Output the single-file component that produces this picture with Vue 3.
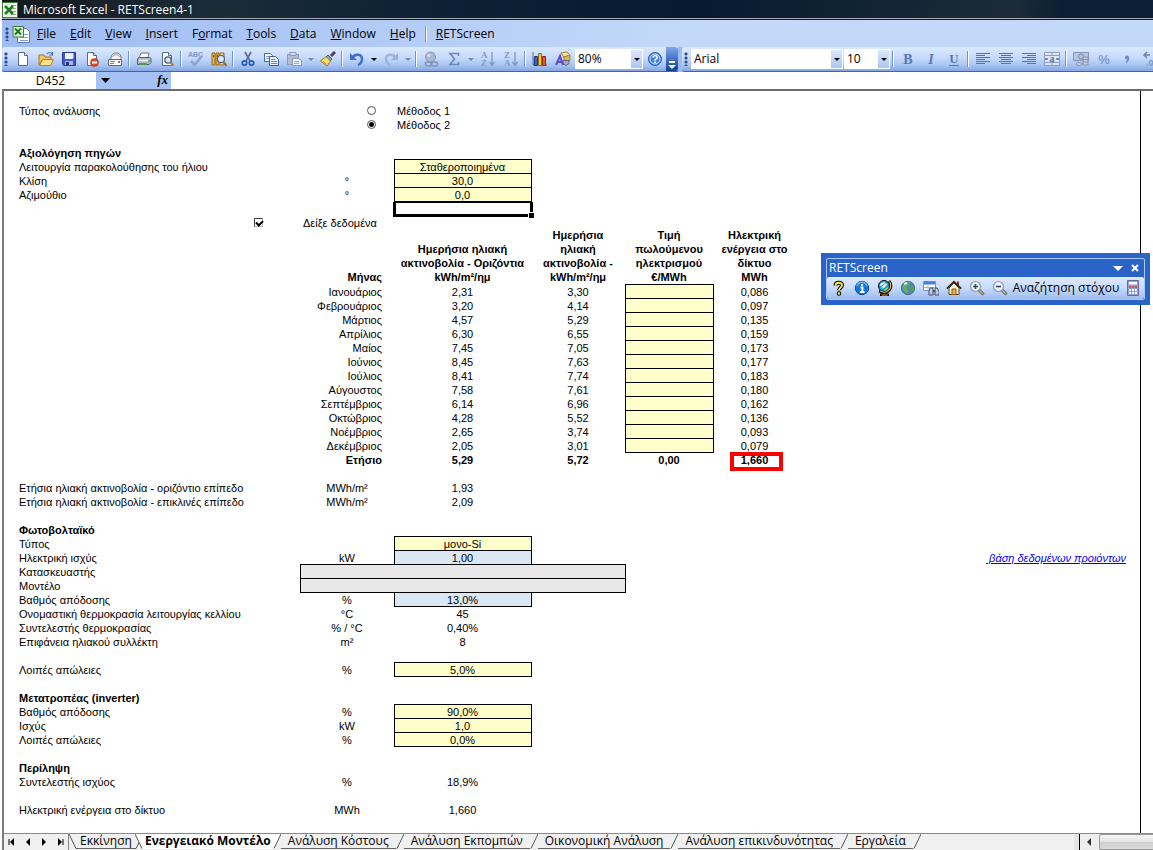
<script setup>
import { ref } from 'vue'

const menus = [
  ['', 'F', 'ile'], ['', 'E', 'dit'], ['', 'V', 'iew'], ['', 'I', 'nsert'], ['F', 'o', 'rmat'],
  ['', 'T', 'ools'], ['', 'D', 'ata'], ['', 'W', 'indow'], ['', 'H', 'elp'],
]

const page = '<path d="M3.5 1.5h6l3 3v10h-9z" fill="#fff" stroke="#5a6a8c"/><path d="M9.500 1.500v3h3" fill="#d5e2f7" stroke="#5a6a8c"/>'
const art = {
  new: page,
  open: '<path d="M1 4h5l1 2h6v3H4l-3 5z" fill="#f6c65a" stroke="#a87420"/><path d="M1.500 14.500l3-6h11l-3 6z" fill="#ffe08a" stroke="#b98127"/><path d="M9 3c2-2 4-2 5 0M14.500 1v3h-3" fill="none" stroke="#4a6fae" stroke-width="1.200"/>',
  save: '<path d="M1.500 1.500h13v13h-12l-1-1z" fill="#4457c8" stroke="#2c3a94"/><path d="M4 2h8v6H4z" fill="#eef2ff"/><path d="M4 10h8v4H4z" fill="#a9b4e4"/><path d="M5 11h3v3H5z" fill="#26327e"/><path d="M12.500 2v5" stroke="#8d9aec"/>',
  perm: page + '<circle cx="10.500" cy="11.500" r="4" fill="#e2491d" stroke="#a12a0c" stroke-width=".6"/><path d="M8 11.500h5" stroke="#fff" stroke-width="2"/>',
  mail: '<path d="M4 6c1-5 9-6 10 0v3H4z" fill="#f4f4f4" stroke="#6d7382"/><path d="M5.500 6c1-3 6-3 7 0" fill="none" stroke="#9aa0b0"/><path d="M1.500 8.500h13v6h-13z" fill="#fff" stroke="#5f6779"/><path d="M3 10.500h5M3 12.500h4" stroke="#6b88c2"/><path d="M11 10h2v2h-2z" fill="#cf5944"/>',
  print: '<path d="M5 2h8l-1 5H3z" fill="#fff" stroke="#6a7386"/><path d="M1.500 7.500l2-1h10l1.500 1v4l-2 2h-11.500z" fill="#b9bfca" stroke="#555d6c"/><path d="M3 9.500h9" stroke="#f8f8f8"/><path d="M3 12h8v2H3z" fill="#4f9a4f"/><path d="M12 9h2v2h-2z" fill="#58c058"/>',
  preview: page + '<circle cx="9" cy="9" r="3.200" fill="#cfe3fb" stroke="#4d5d7e" stroke-width="1.300"/><path d="M11.500 11.500l3 3" stroke="#c08124" stroke-width="2.400"/>',
  spell: '<text x="0" y="6" font-size="7" font-weight="bold" font-family="Liberation Sans" fill="#7f97c6">ABC</text><path d="M3 10l3.500 4L14 5" fill="none" stroke="#8ca4cf" stroke-width="2.600"/>',
  research: '<path d="M1 2h3v12H1zM5 2h3v12H5z" fill="#e6b24c" stroke="#9a6a1d"/><path d="M9 2h4v12H9z" fill="#f1d08a" stroke="#9a6a1d"/><path d="M2 5h1M6 5h1M10 5h2" stroke="#b0432b" stroke-width="2"/><circle cx="10" cy="8" r="3.500" fill="#d8e9ff" stroke="#50638f" stroke-width="1.200"/><path d="M12.500 11l3 4" stroke="#a05f1c" stroke-width="2"/>',
  cut: '<path d="M5 1l5 9M11 1L6 10" stroke="#5c6c8a" stroke-width="1.600"/><circle cx="4.500" cy="12" r="2.200" fill="none" stroke="#2458b8" stroke-width="1.700"/><circle cx="11.500" cy="12" r="2.200" fill="none" stroke="#2458b8" stroke-width="1.700"/>',
  copy: '<path d="M1.500 2.500h6l2 2v6h-8z" fill="#fff" stroke="#4a68aa"/><path d="M3 5.500h4M3 7.500h4" stroke="#7d9ad2"/><path d="M6.500 5.500h6l3 3v6h-9z" fill="#eef4ff" stroke="#3c5ca4"/><path d="M8 8.500h4M8 10.500h6M8 12.500h6" stroke="#5f83cb"/>',
  paste: '<path d="M1.500 3.500h11v10h-11z" fill="#b3bfd6" stroke="#8798bb"/><path d="M4 1.500h6v3H4z" fill="#d6dcea" stroke="#8798bb"/><path d="M6.500 7.500h6l3 2v5h-9z" fill="#eef2fa" stroke="#8798bb"/><path d="M8 10.500h5M8 12.500h5" stroke="#9aa9c8"/>',
  brush: '<path d="M15 1l-4 4" stroke="#4a3c6c" stroke-width="3"/><path d="M8 4l4 4-2 2-4-4z" fill="#93a0c0" stroke="#4c5570"/><path d="M6 5.500l4.500 4.500-3.500 5-6.500-5z" fill="#f6dd7a" stroke="#9b7b20"/><path d="M3 10l3 3" stroke="#b9962f"/>',
  undo: '<path d="M3 7c3-5 10-4 10 1 0 3-2 5-4 6" fill="none" stroke="#3d6fd0" stroke-width="2.400"/><path d="M1 2v7h7z" fill="#3d6fd0"/>',
  redo: '<path d="M13 7C10 2 3 3 3 8c0 3 2 5 4 6" fill="none" stroke="#9fb3da" stroke-width="2.400"/><path d="M15 2v7H8z" fill="#9fb3da"/>',
  link: '<circle cx="7.500" cy="6" r="5" fill="#aab8d4" stroke="#8796b8"/><circle cx="6" cy="4.500" r="1.800" fill="#d5ddec"/><rect x="2.500" y="11" width="6" height="4" rx="2" fill="none" stroke="#8291b3" stroke-width="1.500"/><rect x="8.500" y="11" width="6" height="4" rx="2" fill="none" stroke="#8291b3" stroke-width="1.500"/>',
  sum: '<path d="M12.500 5V2.500H4L8.500 8 4 13.500h8.500V11" fill="none" stroke="#6d88bf" stroke-width="1.600"/>',
  az: '<text x="1" y="7" font-size="9" font-family="Liberation Serif" font-weight="bold" fill="#8397c2">A</text><text x="1" y="15" font-size="9" font-family="Liberation Serif" font-weight="bold" fill="#8397c2">Z</text><path d="M12 1v12M9.500 11l2.500 3.500 2.500-3.500" fill="none" stroke="#8397c2" stroke-width="1.300"/>',
  za: '<text x="1" y="7" font-size="9" font-family="Liberation Serif" font-weight="bold" fill="#8397c2">Z</text><text x="1" y="15" font-size="9" font-family="Liberation Serif" font-weight="bold" fill="#8397c2">A</text><path d="M12 1v12M9.500 11l2.500 3.500 2.500-3.500" fill="none" stroke="#8397c2" stroke-width="1.300"/>',
  chart: '<path d="M1 1v13h14" fill="none" stroke="#5c6474"/><path d="M2.500 5.500h3v9h-3z" fill="#3566d2" stroke="#1d3a86"/><path d="M6.500 2.500h3v12h-3z" fill="#f4c838" stroke="#8f6d0a"/><path d="M10.500 5.500h3v9h-3z" fill="#e5592a" stroke="#8b2a0c"/>',
  draw: '<path d="M6 2l6-1 3 3-6 2z" fill="#ffe79a" stroke="#a8862d"/><path d="M9 6l6-2v5l-6 3z" fill="#e2b54b" stroke="#a8862d"/><path d="M8 9.500h6v3l-3 2-3-2z" fill="#a8acb8" stroke="#626879"/><path d="M1 14l4-9 3 9M2.500 11h5" fill="none" stroke="#5a4fc0" stroke-width="2"/>',
  help: '<circle cx="8" cy="8" r="6.500" fill="#3f7ee0" stroke="#2a5cb6"/><circle cx="8" cy="8" r="5" fill="none" stroke="#d7e6ff"/><text x="8" y="12" font-size="11" text-anchor="middle" font-family="Liberation Sans" font-weight="bold" fill="#fff">?</text>',
  bold: '<text x="8" y="13" font-size="14" text-anchor="middle" font-family="Liberation Serif" font-weight="bold" fill="#5878b4">B</text>',
  italic: '<text x="8" y="13" font-size="14" text-anchor="middle" font-family="Liberation Serif" font-style="italic" font-weight="bold" fill="#5878b4">I</text>',
  underline: '<text x="8" y="12" font-size="13" text-anchor="middle" font-family="Liberation Serif" font-weight="bold" fill="#5878b4">U</text><path d="M3 14.500h10" stroke="#5878b4"/>',
  left: '<path d="M1 2.500h14M1 4.500h9M1 6.500h14M1 8.500h9M1 10.500h14M1 12.500h9" stroke="#5272b0"/>',
  center: '<path d="M1 2.500h14M3 4.500h10M1 6.500h14M3 8.500h10M1 10.500h14M3 12.500h10" stroke="#5272b0"/>',
  right: '<path d="M1 2.500h14M6 4.500h9M1 6.500h14M6 8.500h9M1 10.500h14M6 12.500h9" stroke="#5272b0"/>',
  merge: '<path d="M.5 1.500h15v13H.5z" fill="#dfe6f3" stroke="#8c9dc2"/><path d="M.5 4.500h15M.5 11.500h15M8 1.500v3M8 11.500v3" stroke="#8c9dc2"/><text x="8" y="11" font-size="10" text-anchor="middle" font-family="Liberation Serif" font-weight="bold" fill="#5070ac">a</text><path d="M1 8h3M12 8h3" stroke="#5070ac" stroke-width="1.500"/>',
  money: '<path d="M.5 1.500h15v8H.5z" fill="#b9c6e0" stroke="#8395bd"/><circle cx="8" cy="5.500" r="2.500" fill="none" stroke="#7385ae"/><path d="M10 6h5v8h-5z" fill="#c7cede" stroke="#8593b3"/><path d="M10 8.500h5M10 11h5" stroke="#8593b3"/><ellipse cx="6" cy="13" rx="3" ry="1.500" fill="#c7cede" stroke="#8593b3"/>',
  percent: '<text x="8" y="13" font-size="13" text-anchor="middle" font-family="Liberation Sans" fill="#6c87bd">%</text>',
  comma: '<circle cx="8" cy="6.500" r="2" fill="#6c87bd"/><path d="M9.500 6.500c0 3-1 4-2.500 5" fill="none" stroke="#6c87bd" stroke-width="1.500"/>',
  decimal: '<path d="M2 4h6M5 1L2 4l3 3" fill="none" stroke="#6c87bd" stroke-width="1.600"/><text x="4" y="15" font-size="9" font-family="Liberation Sans" font-weight="bold" fill="#7f96c6">.0</text>',
  question: '<path d="M4.500 5.500C4.500 2 11 2 11 5c0 2.600-3 3-3 5.300" fill="none" stroke="#000" stroke-width="4"/><path d="M4.500 5.500C4.500 2 11 2 11 5c0 2.600-3 3-3 5" fill="none" stroke="#ffe94a" stroke-width="1.900"/><circle cx="8" cy="13.500" r="2.200" fill="#000"/><circle cx="8" cy="13.500" r="1.200" fill="#ffe94a"/>',
  info: '<circle cx="8" cy="8" r="6.700" fill="#1678d4" stroke="#0b4d9c"/><path d="M3 6c2-5 8-5 10 0" fill="none" stroke="#6db7f4" stroke-width="1.500"/><path d="M8 4v2M6.500 7.500h2V12M6 12h4.500" fill="none" stroke="#fff" stroke-width="1.800"/>',
  globe: '<path d="M12 1c4 5 1 11-5 11.500L2 11M8 12.500V15M3 15h9" fill="none" stroke="#000" stroke-width="3"/><circle cx="7" cy="6" r="5.500" fill="#28b7e8" stroke="#000"/><path d="M3 4l4-2 3 2-3 4-3-1z" fill="#e8f6ff"/><path d="M7 9l3-3 1 3-3 2z" fill="#78e05a"/><path d="M2 8l8-6M5 11l7-6" stroke="#0b5f9c" stroke-width=".7"/><path d="M12.500 1.500c3 5 0 10-5.500 11L3 11M4.500 15h6" fill="none" stroke="#f4c621" stroke-width="1.200"/>',
  earth: '<circle cx="8" cy="8" r="6.700" fill="#5d84b8" stroke="#4b6f8e"/><path d="M3 5c2-3 5-4 7-3l-1 3-3 2 2 3-1 3c-3-1-5-4-4-8z" fill="#58b858"/><path d="M10 7l4-1c0 4-1 6-3 7z" fill="#4ba64b"/><path d="M4 4l3-1" stroke="#dff0ff" stroke-width="2"/>',
  find: '<path d="M.5 1.500h12v9H.5z" fill="#fff" stroke="#7894cc"/><path d="M1 3h11" stroke="#4a7edc" stroke-width="3"/><path d="M1 7.500h11M5 4v6" stroke="#9db4e0"/><path d="M7 8h3v7H6v-4zM12 8h2l2 3v4h-4z" fill="#c2cada" stroke="#44516e"/><path d="M10 11h2" stroke="#44516e" stroke-width="2"/>',
  home: '<path d="M3 8v6.500h10V8L8 3z" fill="#fff7dc" stroke="#5c4020"/><path d="M12 1.500v4" stroke="#8e3820" stroke-width="2"/><path d="M.8 8.700L8 1.800l7.200 6.900" fill="none" stroke="#3c2b16" stroke-width="1.800"/><path d="M6 9h4v5.500H6z" fill="#eab34c" stroke="#83551b"/>',
  zoomin: '<path d="M9.500 9.500l5 5" stroke="#4a5468" stroke-width="3"/><path d="M10 10l4 4" stroke="#e0b448" stroke-width="1.400"/><circle cx="6.500" cy="6.500" r="5" fill="#eef5ff" stroke="#8b9bb8" stroke-width="1.200"/><path d="M4 6.500h5M6.500 4v5" stroke="#3b4658" stroke-width="1.600"/>',
  zoomout: '<path d="M9.500 9.500l5 5" stroke="#4a5468" stroke-width="3"/><path d="M10 10l4 4" stroke="#e0b448" stroke-width="1.400"/><circle cx="6.500" cy="6.500" r="5" fill="#eef5ff" stroke="#8b9bb8" stroke-width="1.200"/><path d="M4 6.500h5" stroke="#3b4658" stroke-width="1.600"/>',
  calc: '<path d="M2.500.5h11v15h-11z" fill="#8da2dc" stroke="#5a6dac"/><path d="M4 2h8v2.500H4z" fill="#fff"/><path d="M4 7h8M4 10h8M4 13h8" stroke="#fff" stroke-width="2" stroke-dasharray="2 1"/><path d="M4 7h8" stroke="#d64b3c" stroke-width="2" stroke-dasharray="2 1"/>',
  dd: '<path d="M5 7h6L8 10z" fill="#000"/>',
  ddoff: '<path d="M5 7h6L8 10z" fill="#7f8694"/>',
}

const standard = ['new', 'open', 'save', 'perm', 'mail', '|', 'print', 'preview', '|', 'spell', 'research', '|', 'cut', 'copy', 'paste', 'ddoff', 'brush', '|', 'undo', 'dd', 'redo', 'ddoff', '|', 'link', 'sum', 'ddoff', 'az', 'za', '|', 'chart', 'draw']
const formatting = ['|', 'bold', 'italic', 'underline', '|', 'left', 'center', 'right', 'merge', '|', 'money', 'percent', 'comma', 'decimal']
const palette = ['question', 'info', 'globe', 'earth', 'find', 'home', 'zoomin', 'zoomout']

const method = ref(2)
const showData = ref(true)
const name = ref('D452')
const formula = ref('')

const tracking = [
  ['Λειτουργία παρακολούθησης του ήλιου', '', 'Σταθεροποιημένα'],
  ['Κλίση', '°', '30,0'],
  ['Αζιμούθιο', '°', '0,0'],
]
const months = [
  ['Ιανουάριος', '2,31', '3,30', '0,086'], ['Φεβρουάριος', '3,20', '4,14', '0,097'],
  ['Μάρτιος', '4,57', '5,29', '0,135'], ['Απρίλιος', '6,30', '6,55', '0,159'],
  ['Μαίος', '7,45', '7,05', '0,173'], ['Ιούνιος', '8,45', '7,63', '0,177'],
  ['Ιούλιος', '8,41', '7,74', '0,183'], ['Αύγουστος', '7,58', '7,61', '0,180'],
  ['Σεπτέμβριος', '6,14', '6,96', '0,162'], ['Οκτώβριος', '4,28', '5,52', '0,136'],
  ['Νοέμβριος', '2,65', '3,74', '0,093'], ['Δεκέμβριος', '2,05', '3,01', '0,079'],
]
const lower = [
  { gap: true },
  { label: 'Ετήσια ηλιακή ακτινοβολία - οριζόντιο επίπεδο', unit: 'MWh/m²', value: '1,93' },
  { label: 'Ετήσια ηλιακή ακτινοβολία - επικλινές επίπεδο', unit: 'MWh/m²', value: '2,09' },
  { gap: true },
  { head: 'Φωτοβολταϊκό' },
  { label: 'Τύπος', value: 'μονο-Si', kind: 'yellow' },
  { label: 'Ηλεκτρική ισχύς', unit: 'kW', value: '1,00', kind: 'blue', link: true },
  { label: 'Κατασκευαστής', wide: true, value: '' },
  { label: 'Μοντέλο', wide: true, value: '' },
  { label: 'Βαθμός απόδοσης', unit: '%', value: '13,0%', kind: 'blue' },
  { label: 'Ονομαστική θερμοκρασία λειτουργίας κελλίου', unit: '°C', value: '45' },
  { label: 'Συντελεστής θερμοκρασίας', unit: '% / °C', value: '0,40%' },
  { label: 'Επιφάνεια ηλιακού συλλέκτη', unit: 'm²', value: '8' },
  { gap: true },
  { label: 'Λοιπές απώλειες', unit: '%', value: '5,0%', kind: 'yellow' },
  { gap: true },
  { head: 'Μετατροπέας (inverter)' },
  { label: 'Βαθμός απόδοσης', unit: '%', value: '90,0%', kind: 'yellow' },
  { label: 'Ισχύς', unit: 'kW', value: '1,0', kind: 'yellow' },
  { label: 'Λοιπές απώλειες', unit: '%', value: '0,0%', kind: 'yellow' },
  { gap: true },
  { head: 'Περίληψη' },
  { label: 'Συντελεστής ισχύος', unit: '%', value: '18,9%' },
  { gap: true },
  { label: 'Ηλεκτρική ενέργεια στο δίκτυο', unit: 'MWh', value: '1,660' },
]
const tabs = ['Εκκίνηση', 'Ενεργειακό Μοντέλο', 'Ανάλυση Κόστους', 'Ανάλυση Εκπομπών', 'Οικονομική Ανάλυση', 'Ανάλυση επικινδυνότητας', 'Εργαλεία']
const active = ref(1)
const nav = [
  ['Πρώτο φύλλο', 'M5 5v6', 'M10 4v8L6 8z'], ['Προηγούμενο φύλλο', '', 'M10 4v8L6 8z'],
  ['Επόμενο φύλλο', '', 'M6 4v8l4-4z'], ['Τελευταίο φύλλο', 'M11 5v6', 'M6 4v8l4-4z'],
]
</script>

<template>
  <div class="window">
    <header class="title">
      <svg width="16" height="16" viewBox="0 0 16 16"><path d="M.5.500h15v15H.5z" fill="#e9f3e4" stroke="#3f7d38" /><path d="M9 3.500h5M9 6.500h5M9 9.500h5M9 12.500h5" stroke="#86b67e" /><path d="M3 4l8 8M11 4l-8 8" stroke="#1f7a25" stroke-width="2.500" /></svg>
      <span>Microsoft Excel - RETScreen4-1</span>
    </header>

    <nav class="menu">
      <i class="grip"></i>
      <svg width="18" height="18" viewBox="0 0 18 18"><path d="M5.500 3.500h9l3 3v11h-12z" fill="#fff" stroke="#6077a8" /><path d="M12 9.500h4M8 12.500h8M8 15.500h8" stroke="#7d9fe0" /><path d="M1 1.500h10.500V12H1z" fill="#dcefd6" stroke="#3f7d38" /><path d="M3 3.500l6 6M9 3.500l-6 6" stroke="#1f7a25" stroke-width="2" /></svg>
      <button v-for="m in menus" :key="m[1] + m[2]" type="button">{{ m[0] }}<u>{{ m[1] }}</u>{{ m[2] }}</button>
      <i class="sep"></i>
      <button type="button"><u>R</u>ETScreen</button>
    </nav>

    <div class="bars">
      <div class="bar">
        <i class="grip"></i>
        <template v-for="(n, i) in standard" :key="i">
          <i v-if="n === '|'" class="sep"></i>
          <button v-else type="button" class="tool" :class="{ narrow: n.startsWith('dd') }" :aria-label="n"><svg width="16" height="16" viewBox="0 0 16 16" v-html="art[n]"></svg></button>
        </template>
        <div class="combo zoom"><select aria-label="Zoom"><option>80%</option></select><span class="arrow"></span></div>
        <button type="button" class="tool" aria-label="help"><svg width="16" height="16" viewBox="0 0 16 16" v-html="art.help"></svg></button>
        <button type="button" class="more" aria-label="more"><svg width="8" height="9" viewBox="0 0 8 9"><path d="M1 1h6" stroke="#fff" stroke-width="2" /><path d="M0 4h8L4 8z" fill="#fff" /></svg></button>
      </div>
      <div class="bar second">
        <i class="grip"></i>
        <div class="combo font"><select aria-label="Font"><option>Arial</option></select><span class="arrow"></span></div>
        <div class="combo size"><select aria-label="Font size"><option>10</option></select><span class="arrow"></span></div>
        <template v-for="(n, i) in formatting" :key="i">
          <i v-if="n === '|'" class="sep"></i>
          <button v-else type="button" class="tool" :aria-label="n"><svg width="16" height="16" viewBox="0 0 16 16" v-html="art[n]"></svg></button>
        </template>
      </div>
    </div>

    <div class="formula">
      <input v-model="name" class="name" aria-label="Name box">
      <button type="button" class="pick" aria-label="names"><svg width="9" height="5" viewBox="0 0 9 5"><path d="M0 0h9L4.500 5z" /></svg></button>
      <span class="fx">fx</span>
      <input v-model="formula" class="entry" aria-label="Formula">
    </div>

    <main class="sheet">
      <div class="canvas">
        <table>
          <colgroup><col class="c1"><col class="c2"><col class="c3"><col class="c4"><col class="c5"><col class="c6"><col></colgroup>
          <tbody>
            <tr>
              <th scope="row">Τύπος ανάλυσης</th>
              <td class="opt"><input id="m1" v-model="method" type="radio" name="method" :value="1"></td>
              <td class="start"><label for="m1">Μέθοδος 1</label></td>
              <td colspan="4"></td>
            </tr>
            <tr>
              <td></td>
              <td class="opt"><input id="m2" v-model="method" type="radio" name="method" :value="2"></td>
              <td class="start"><label for="m2">Μέθοδος 2</label></td>
              <td colspan="4"></td>
            </tr>
            <tr><td colspan="7"></td></tr>
            <tr><th class="b" scope="row">Αξιολόγηση πηγών</th><td colspan="6"></td></tr>
            <tr v-for="(r, i) in tracking" :key="r[0]">
              <th scope="row"><label :for="'t' + i">{{ r[0] }}</label></th>
              <td>{{ r[1] }}</td>
              <td class="box yellow"><input :id="'t' + i" :value="r[2]"></td>
              <td colspan="4"></td>
            </tr>
            <tr><td></td><td></td><td class="picked"><span class="cursor"></span></td><td colspan="4"></td></tr>
            <tr class="short">
              <td class="tick"><input id="show" v-model="showData" type="checkbox"></td>
              <td class="start"><label for="show">Δείξε δεδομένα</label></td>
              <td colspan="5"></td>
            </tr>
            <tr class="heads">
              <td></td>
              <th scope="col" class="end">Μήνας</th>
              <th scope="col">Ημερήσια ηλιακή<br>ακτινοβολία - Οριζόντια<br>kWh/m²/ημ</th>
              <th scope="col">Ημερήσια<br>ηλιακή<br>ακτινοβολία -<br>kWh/m²/ημ</th>
              <th scope="col">Τιμή<br>πωλούμενου<br>ηλεκτρισμού<br>€/MWh</th>
              <th scope="col">Ηλεκτρική<br>ενέργεια στο<br>δίκτυο<br>MWh</th>
              <td></td>
            </tr>
            <tr v-for="m in months" :key="m[0]">
              <td></td>
              <td class="end">{{ m[0] }}</td>
              <td>{{ m[1] }}</td>
              <td>{{ m[2] }}</td>
              <td class="box yellow"><input :aria-label="'Τιμή ' + m[0]"></td>
              <td>{{ m[3] }}</td>
              <td></td>
            </tr>
            <tr class="b">
              <td></td><td class="end">Ετήσιο</td><td>5,29</td><td>5,72</td><td>0,00</td>
              <td class="picked">1,660<span class="ring"></span></td><td></td>
            </tr>
            <tr v-for="(r, i) in lower" :key="'l' + i">
              <td v-if="r.gap" colspan="7"></td>
              <template v-else-if="r.head"><th class="b" scope="row">{{ r.head }}</th><td colspan="6"></td></template>
              <template v-else>
                <th scope="row"><label v-if="r.kind || r.wide" :for="'v' + i">{{ r.label }}</label><template v-else>{{ r.label }}</template></th>
                <td v-if="r.wide" colspan="3" class="box grey"><input :id="'v' + i" :value="r.value"></td>
                <template v-else>
                  <td>{{ r.unit }}</td>
                  <td v-if="r.kind" class="box" :class="r.kind"><input :id="'v' + i" :value="r.value"></td>
                  <td v-else>{{ r.value }}</td>
                  <td></td>
                </template>
                <td></td><td></td>
                <td class="far"><a v-if="r.link" href="#">&nbsp;βάση δεδομένων προιόντων</a></td>
              </template>
            </tr>
          </tbody>
        </table>
      </div>

      <section class="palette">
        <div class="inner">
          <div class="ptitle">
            <span>RETScreen</span>
            <button type="button" aria-label="options"><svg width="10" height="5" viewBox="0 0 10 5"><path d="M0 0h10L5 5z" fill="#fff" /></svg></button>
            <button type="button" aria-label="close"><svg width="8" height="8" viewBox="0 0 8 8"><path d="M1 1l6 6M7 1L1 7" stroke="#fff" stroke-width="2" /></svg></button>
          </div>
          <div class="ptools">
            <button v-for="n in palette" :key="n" type="button" class="tool" :aria-label="n"><svg width="16" height="16" viewBox="0 0 16 16" v-html="art[n]"></svg></button>
            <button type="button" class="goal">Αναζήτηση στόχου</button>
            <button type="button" class="tool" aria-label="calculator"><svg width="16" height="16" viewBox="0 0 16 16" v-html="art.calc"></svg></button>
          </div>
        </div>
      </section>
    </main>

    <footer class="tabs">
      <button v-for="n in nav" :key="n[0]" type="button" class="nav" :aria-label="n[0]"><svg width="16" height="16" viewBox="0 0 16 16"><path :d="n[1]" stroke="#000" /><path :d="n[2]" /></svg></button>
      <i class="rule"></i>
      <svg class="edge" width="8" height="16" viewBox="0 0 8 16"><path d="M0 0l7 14.500h1" fill="none" stroke="#555" /></svg>
      <template v-for="(t, i) in tabs" :key="t">
        <button type="button" class="tab" :class="{ on: i === active, before: i < active }" @click="active = i">{{ t }}</button>
        <svg v-if="i < active" class="edge" width="8" height="16" viewBox="0 0 8 16"><path d="M0 0h8v15H7z" fill="#fff" /><path d="M0 0l7 14.500M4 8.500L1 14.500H0" fill="none" stroke="#555" /></svg>
        <svg v-else class="edge" width="8" height="16" viewBox="0 0 8 16"><path v-if="i === active" d="M0 0h8L1 15H0z" fill="#fff" /><path d="M8 0L1 14.500" fill="none" stroke="#555" /></svg>
      </template>
      <i class="grow"></i>
      <i class="split"></i>
      <button type="button" class="nav scroll" aria-label="Κύλιση αριστερά"><svg width="16" height="16" viewBox="0 0 16 16"><path d="M10 4v8L6 8z" fill="#333" /></svg></button>
      <i class="thumb"></i>
    </footer>
  </div>
</template>

<style>
body { margin: 0; background: #fff; }
</style>

<style scoped>
* { box-sizing: border-box; }
.window { display: flex; flex-direction: column; min-height: 100vh; padding-left: 2px; overflow: hidden; font: 12px/16px "Open Sans", "Noto Sans", sans-serif; color: #000; }
button, input, select { font: inherit; color: inherit; margin: 0; padding: 0; border: 0; background: none; border-radius: 0; }
button { display: inline-flex; align-items: center; justify-content: center; white-space: pre; }
i { display: block; flex: none; }
svg { display: block; flex: none; }

.title { display: flex; align-items: center; gap: 5px; height: 20px; color: #fff; background: linear-gradient(100deg, #14181c 0%, #1b2c38 18%, #0e2236 36%, #061a30 60%, #1b2c38 88%, #0a1f33 92%, #0a1f33 100%); border-bottom: 1px solid #15181c; box-shadow: inset 0 -1px #a9adb3; }
.menu { display: flex; align-items: center; height: 27px; padding-left: 3px; background: linear-gradient(90deg, #9ebcf3, #c4d9f9 60%, #c4d8fa); }
.menu button { height: 20px; padding: 0 7px; }
.grip { width: 7px; height: 14px; background: radial-gradient(circle at 2px 2px, #2b4a8c 1px, transparent 2px) 0 0 / 7px 4px repeat-y; }
.sep { width: 6px; height: 16px; background: linear-gradient(90deg, transparent 2px, #6f94d2 2px 3px, #fff 3px 4px, transparent 4px); }

.bars { display: flex; gap: 4px; background: #9ebcf3; overflow: hidden; }
.bar { display: flex; flex: none; align-items: center; height: 25px; padding-left: 2px; border-bottom: 1px solid #3a66b0; border-radius: 3px 0 0 3px; background: linear-gradient(#dbe9fd, #c6dafb 45%, #a9c5f2 75%, #84a7e2); }
.bar.second { flex: 1 0 auto; margin-right: -20px; }
.tool { flex: none; width: 23px; height: 22px; }
.narrow { width: 11px; }
.combo { position: relative; flex: none; height: 20px; margin-left: 1px; border: 1px solid #fff; background: #fff; }
.combo select { width: 100%; height: 18px; padding: 0 2px; appearance: none; }
.arrow { position: absolute; top: 0; right: 0; width: 11px; height: 18px; pointer-events: none; background: linear-gradient(#dbe8fd, #a9c5f2); }
.arrow::after { content: ""; position: absolute; left: 3px; top: 8px; border: 3px solid transparent; border-top-color: #000; border-bottom: 0; }
.zoom { width: 68px; }
.font { width: 152px; margin-left: 0; }
.size { width: 46px; }
.more { align-self: stretch; align-items: flex-end; width: 12px; padding-bottom: 1px; border-radius: 0 3px 3px 0; background: linear-gradient(#7fa6ea, #0b3f9c); }

.formula { display: flex; height: 17px; background: #a6c1f4; }
.name { width: 94px; background: #fff; text-align: center; padding-left: 3px; }
.pick { width: 18px; }
.fx { flex: none; width: 57px; padding-right: 3px; text-align: right; font: italic 600 13px/16px "Liberation Serif", serif; }
.entry { flex: 1; min-width: 0; background: #fff; }

.sheet { position: relative; display: flex; flex: 1; border-top: 2px solid #6b6b6b; border-left: 2px solid #7b7b7b; }
.canvas { flex: 1; min-width: 0; margin-right: 12px; padding: 12px 0 17px; border-right: 1px solid #000; }
table { width: 100%; table-layout: fixed; border-collapse: separate; border-spacing: 0; font: 11px/12px "Liberation Sans", Arial, sans-serif; }
.c1 { width: 296px; } .c2 { width: 94px; } .c3 { width: 137px; } .c4 { width: 94px; } .c5 { width: 88px; } .c6 { width: 83px; }
tr { height: 14px; }
td, th { height: 14px; padding: 2px 0 0; text-align: center; font-weight: 400; white-space: nowrap; vertical-align: top; }
th:first-child { padding-left: 15px; text-align: left; }
.b, .b td, .heads th { font-weight: 700; }
.heads th { height: 56px; padding: 0; line-height: 14px; vertical-align: bottom; }
.short, .short td { height: 13px; line-height: 10px; }
.short .start { padding-top: 3px; }
.start { padding-left: 3px; text-align: left; }
.end, .heads .end { padding-right: 12px; text-align: right; }
td.opt { padding: 0 18px 0 0; }
td.tick { padding: 0 37px 0 0; }
.opt input, .tick input { display: block; appearance: none; width: 9px; height: 9px; margin: 3px 0 1px auto; border: 1px solid #555; background: #fff; }
.opt input { border-radius: 50%; }
.opt input:checked { background: radial-gradient(circle, #000 2px, #fff 3px); }
.tick input { position: relative; border-color: #444 #bbb #bbb #444; }
.tick input:checked::before { content: ""; position: absolute; left: 1px; top: 1px; width: 5px; height: 3px; border: solid #000; border-width: 0 0 2px 2px; transform: rotate(-45deg); }
td.box { padding: 0; box-shadow: inset 1px 1px #000, 1px 0 #000, 0 1px #000, 1px 1px #000; }
.box input { display: block; width: 100%; height: 14px; padding-top: 1px; line-height: 13px; text-align: center; }
.yellow { background: #ffffcc; }
.blue { background: #dbe8f4; }
.grey { background: #e8e8e8; }
.picked { position: relative; }
.cursor { position: absolute; inset: 1px -2px -2px -1px; border: solid #000; border-width: 1px 3px 3px; }
.cursor::after { content: ""; position: absolute; right: -4px; bottom: -4px; width: 5px; height: 5px; background: #000; border: solid #fff; border-width: 1px 0 0 1px; }
.ring { position: absolute; inset: 0 13px -5px 17px; border: 4px solid #f00; }
.far { padding-right: 14px; text-align: right; }
.far a { color: #00f; font-style: italic; }

.palette { position: absolute; top: 162px; right: 3px; width: 329px; padding: 5px; background: #2a64c8; }
.inner { border: 1px solid #a9c8f6; border-radius: 2px; }
.ptitle { display: flex; align-items: center; gap: 8px; height: 18px; padding: 0 5px 0 2px; color: #fff; }
.ptitle span { flex: 1; }
.ptools { display: flex; align-items: center; height: 22px; background: linear-gradient(#dfebfd, #c6dafb 50%, #9dbcee); border-radius: 2px; }
.goal { flex: 1; }

.tabs { display: flex; height: 17px; border-top: 1px solid #8a8a8a; border-left: 2px solid #7b7b7b; background: #f0f0f0; }
.nav { width: 16px; height: 16px; }
.rule { width: 1px; background: #888; }
.tab { height: 15px; padding: 0 7px; border-bottom: 1px solid #666; }
.tab.before { padding: 0 3px; }
.tab.on { font-weight: 700; background: #fff; border-bottom-color: #fff; padding: 0 2px; }
.grow { flex: 1; }
.split { width: 6px; margin-right: 1px; border: solid #000; border-width: 0 1px 0 0; background: #e4e4e4; }
.scroll { margin-right: 2px; background: #eee; }
.thumb { width: 54px; border: 1px solid #9a9a9a; border-right: 0; border-radius: 2px 0 0 2px; background: linear-gradient(#f6f6f6, #e2e2e2 50%, #cfcfcf 50%, #dadada); }
</style>
